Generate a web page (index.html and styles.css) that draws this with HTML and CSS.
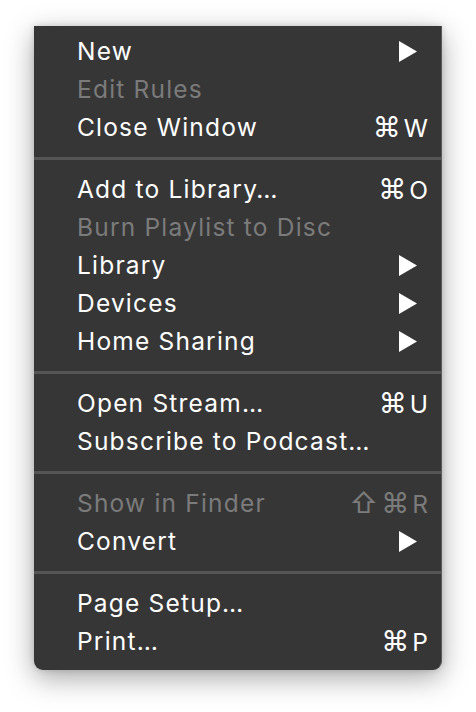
FILE: index.html
```html
<!DOCTYPE html>
<html>
<head>
<meta charset="utf-8">
<link rel="stylesheet" href="styles.css">
</head>
<body>
<div class="page">
  <div class="menu">
    <div class="item"><span class="label">New</span><svg class="arrow" viewBox="0 0 18 21"><polygon points="0,0 18,10.5 0,21"/></svg></div>
    <div class="item disabled"><span class="label">Edit Rules</span></div>
    <div class="item"><span class="label">Close Window</span><span class="key"><span class="sym">⌘</span>W</span></div>
    <div class="sep"></div>
    <div class="item"><span class="label">Add to Library…</span><span class="key"><span class="sym">⌘</span>O</span></div>
    <div class="item disabled"><span class="label">Burn Playlist to Disc</span></div>
    <div class="item"><span class="label">Library</span><svg class="arrow" viewBox="0 0 18 21"><polygon points="0,0 18,10.5 0,21"/></svg></div>
    <div class="item"><span class="label">Devices</span><svg class="arrow" viewBox="0 0 18 21"><polygon points="0,0 18,10.5 0,21"/></svg></div>
    <div class="item"><span class="label">Home Sharing</span><svg class="arrow" viewBox="0 0 18 21"><polygon points="0,0 18,10.5 0,21"/></svg></div>
    <div class="sep"></div>
    <div class="item"><span class="label">Open Stream…</span><span class="key"><span class="sym">⌘</span>U</span></div>
    <div class="item"><span class="label">Subscribe to Podcast…</span></div>
    <div class="sep"></div>
    <div class="item disabled"><span class="label">Show in Finder</span><span class="key"><span class="sym">⇧</span><span class="sym">⌘</span>R</span></div>
    <div class="item"><span class="label">Convert</span><svg class="arrow" viewBox="0 0 18 21"><polygon points="0,0 18,10.5 0,21"/></svg></div>
    <div class="sep"></div>
    <div class="item"><span class="label">Page Setup…</span></div>
    <div class="item"><span class="label">Print…</span><span class="key"><span class="sym">⌘</span>P</span></div>
  </div>
</div>
</body>
</html>
```

FILE: styles.css
```css
html, body {
  margin: 0;
  padding: 0;
  background: #ffffff;
}
.page {
  padding: 26px 0 0 34px;
  height: 712px;
  box-sizing: border-box;
}
.menu {
  width: 407px;
  background: #363636;
  border-right: 1px solid #5a5a5a;
  border-radius: 0 0 9px 9px;
  padding: 6px 0 10px 0;
  box-shadow: 0 8px 28px rgba(0, 0, 0, 0.35), 0 0 6px rgba(0, 0, 0, 0.15);
  font-family: Inter, "Noto Sans", "DejaVu Sans", sans-serif;
  font-size: 24.5px;
  letter-spacing: 1.2px;
  color: #ffffff;
}
.item {
  height: 38px;
  display: flex;
  align-items: center;
  justify-content: space-between;
  padding: 0 13px 0 43px;
}
.label {
  white-space: nowrap;
}
.disabled {
  color: #7b7b7b;
}
.key {
  white-space: nowrap;
  letter-spacing: 0;
}
.sym {
  font-size: 28px;
  margin-right: 3px;
}
.arrow {
  width: 18px;
  height: 21px;
  margin-right: 11px;
  fill: #ffffff;
}
.sep {
  height: 3px;
  background: #555555;
  margin: 11px 0 10px 0;
}
```
